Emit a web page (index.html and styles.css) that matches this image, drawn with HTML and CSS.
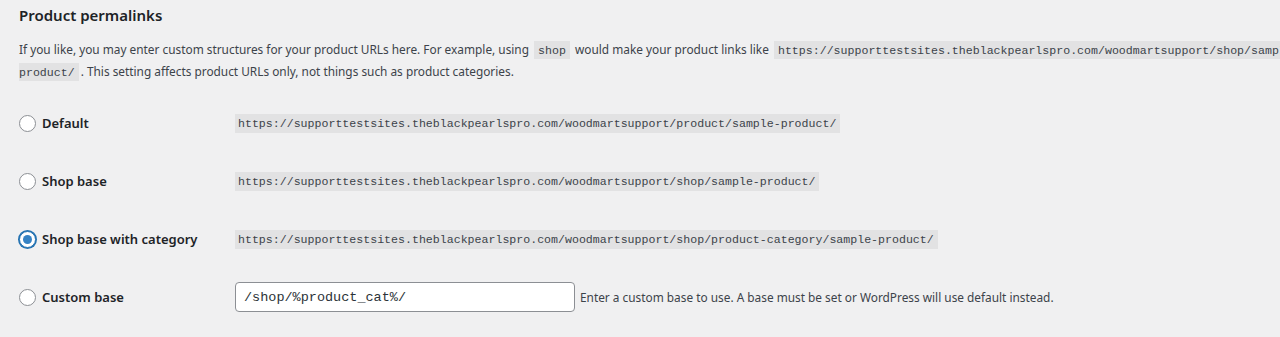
FILE: index.html
```html
<!DOCTYPE html>
<html lang="en">
<head>
    <meta charset="UTF-8">
    <meta name="viewport" content="width=device-width, initial-scale=1.0">
    <title>Product permalinks</title>
    <link rel="stylesheet" href="styles.css">
</head>
<body>
    <div class="wrap">
        <h2>Product permalinks</h2>
        <p class="intro">If you like, you may enter custom structures for your product URLs here. For example, using <code>shop</code> would make your product links like <code>https://supporttestsites.theblackpearlspro.com/woodmartsupport/shop/sample-<br>product/</code>. This setting affects product URLs only, not things such as product categories.</p>

        <div class="form-table">
            <div class="row">
                <label class="choice"><input type="radio" name="product_permalink" value=""> Default</label>
                <div class="value"><code>https://supporttestsites.theblackpearlspro.com/woodmartsupport/product/sample-product/</code></div>
            </div>
            <div class="row">
                <label class="choice"><input type="radio" name="product_permalink" value="/shop"> Shop base</label>
                <div class="value"><code>https://supporttestsites.theblackpearlspro.com/woodmartsupport/shop/sample-product/</code></div>
            </div>
            <div class="row">
                <label class="choice"><input type="radio" name="product_permalink" value="/shop/%product_cat%" checked class="focused"> Shop base with category</label>
                <div class="value"><code>https://supporttestsites.theblackpearlspro.com/woodmartsupport/shop/product-category/sample-product/</code></div>
            </div>
            <div class="row">
                <label class="choice"><input type="radio" name="product_permalink" value="custom"> Custom base</label>
                <div class="value">
                    <input type="text" class="regular-text code" value="/shop/%product_cat%/">
                    <span class="description">Enter a custom base to use. A base must be set or WordPress will use default instead.</span>
                </div>
            </div>
        </div>
    </div>
</body>
</html>
```

FILE: styles.css
```css
body {
    margin: 0;
    background: #f0f0f1;
    color: #3c434a;
    font-family: "Noto Sans", sans-serif;
    font-size: 11.85px;
    overflow: hidden;
}
.wrap {
    padding: 0 0 0 19px;
    width: 1300px;
}
h2 {
    margin: 0;
    padding-top: 4px;
    height: 28px;
    font-size: 15px;
    font-weight: 600;
    color: #1d2327;
    line-height: 22px;
}
.intro {
    margin: 7px 0 0;
    line-height: 21px;
    white-space: nowrap;
}
code {
    font-family: "Liberation Mono", monospace;
    font-size: 11.6px;
    background: #e2e2e3;
    padding: 3px 4px 2px;
    margin: 0 2px;
    color: #3c434a;
}
.form-table {
    margin-top: 11px;
}
.row {
    display: flex;
    align-items: center;
    height: 58px;
}
.choice {
    width: 216px;
    display: flex;
    align-items: center;
    gap: 6px;
    font-size: 13px;
    font-weight: 600;
    color: #1d2327;
}
input[type="radio"] {
    appearance: none;
    margin: 0;
    width: 17px;
    height: 17px;
    border: 1px solid #8c8f94;
    border-radius: 50%;
    background: #fff;
    box-sizing: border-box;
    position: relative;
}
input[type="radio"]:checked::before {
    content: "";
    position: absolute;
    left: 3px;
    top: 3px;
    width: 9px;
    height: 9px;
    border-radius: 50%;
    background: #3582c4;
}
input[type="radio"].focused {
    border-color: #2271b1;
    box-shadow: 0 0 0 1px #2271b1;
}
.value {
    display: flex;
    align-items: center;
}
.value code {
    margin: 0;
    padding: 3px 4px 3px 3px;
}
.regular-text {
    width: 340px;
    height: 30px;
    box-sizing: border-box;
    border: 1px solid #8c8f94;
    border-radius: 4px;
    background: #fff;
    padding: 0 8px;
    font-family: "Liberation Mono", monospace;
    font-size: 13.5px;
    color: #2c3338;
    margin: 0 5px 0 0;
}
.description {
    font-size: 11.85px;
    color: #3c434a;
}
```
